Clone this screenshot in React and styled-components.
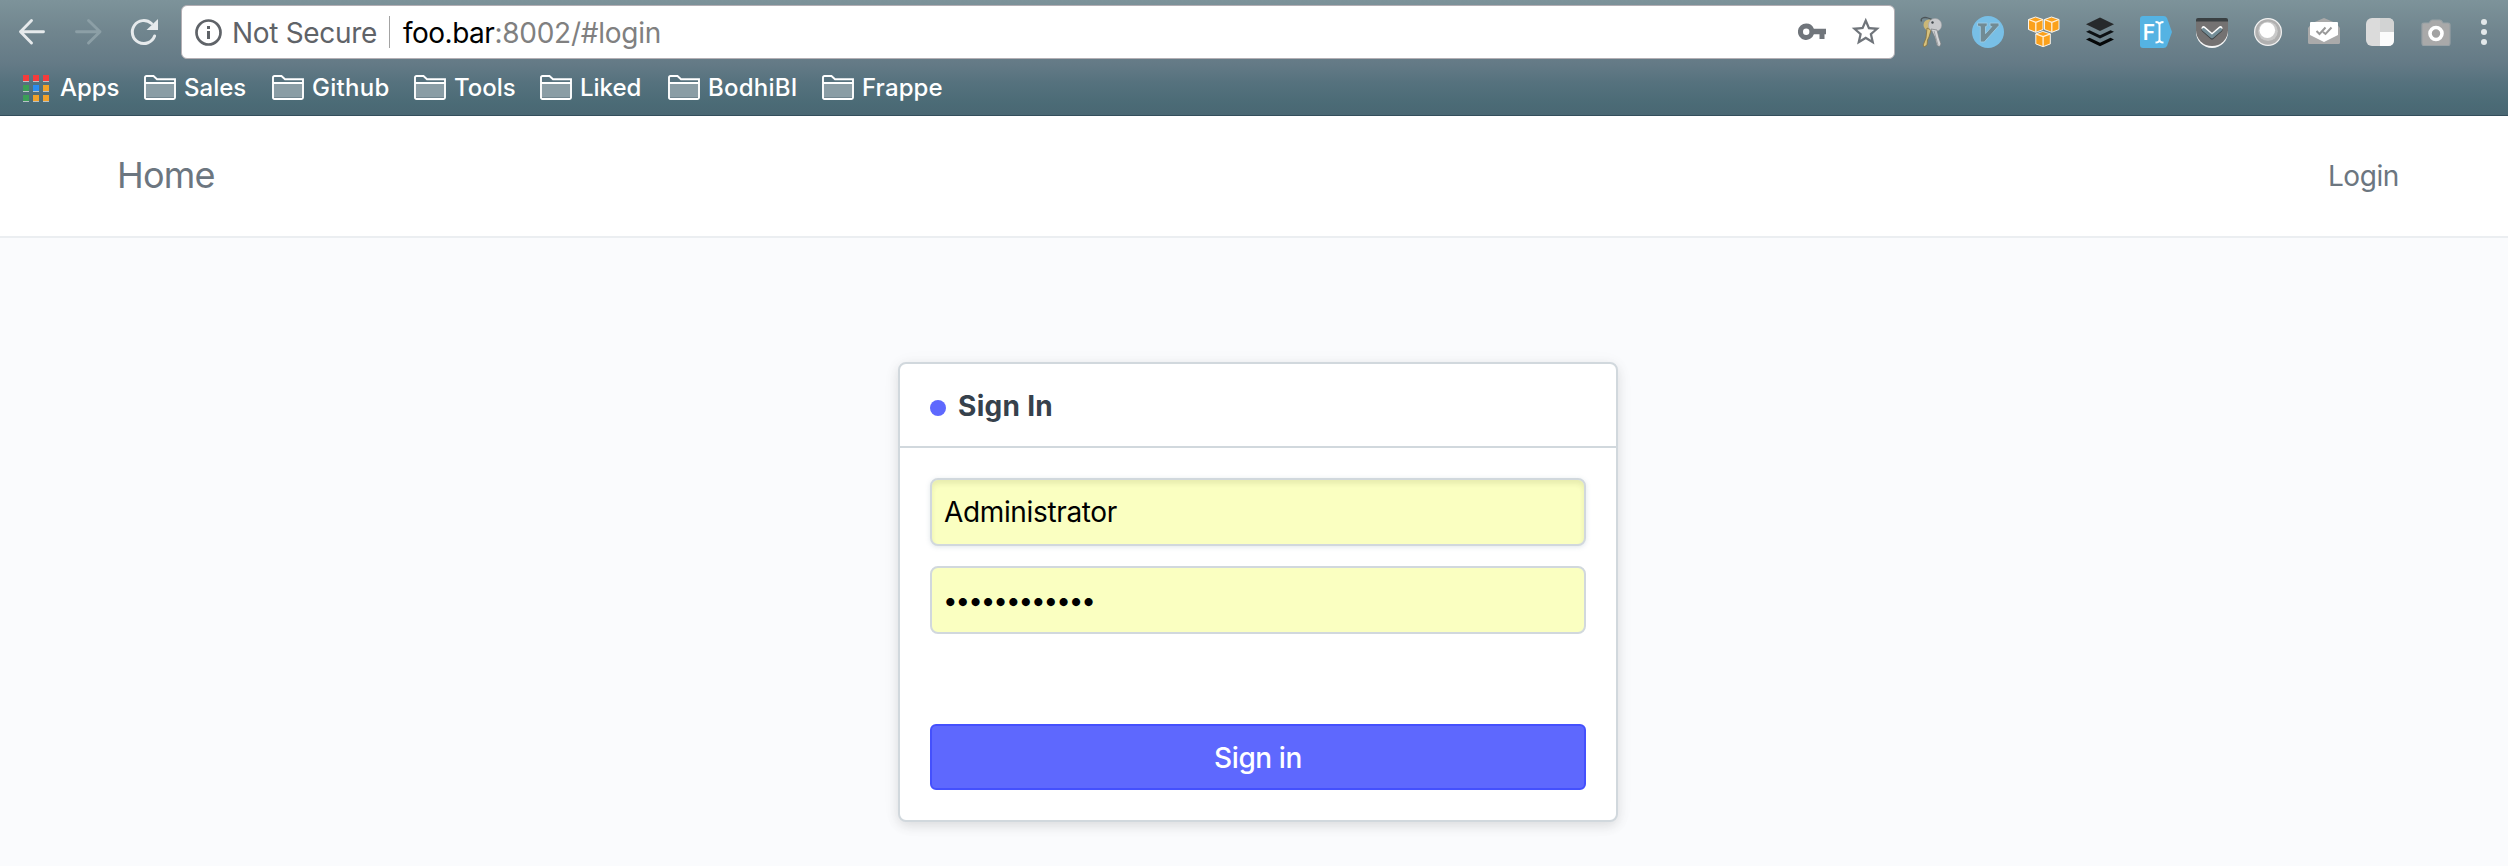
import React from "react";
import styled, { createGlobalStyle } from "styled-components";

const GlobalStyle = createGlobalStyle`
  *, *::before, *::after { box-sizing: border-box; }
  body {
    margin: 0;
    background: #fafbfd;
    font-family: "Inter", "Roboto", sans-serif;
  }
`;

const Page = styled.div`
  display: flex;
  flex-direction: column;
  min-height: 866px;
  overflow: hidden;
`;

/* ---------- Browser chrome ---------- */

const Chrome = styled.header`
  height: 116px;
  flex: none;
  border-bottom: 1px solid #344e5c;
  background: linear-gradient(#7d939a 0, #70858e 32px, #647a86 64px, #56727e 82px, #4b6b76 103px, #4a6773 115px);
`;

const Toolbar = styled.div`
  display: flex;
  align-items: center;
  height: 64px;
  padding: 0 16px;
`;

const NavButtons = styled.div`
  display: flex;
  gap: 24px;
  margin-right: 21px;
`;

const Glyph = styled.svg`
  display: block;
  flex: none;
  width: ${(p) => p.$w || 32}px;
  height: ${(p) => p.$h || 32}px;
`;

const AddressBar = styled.div`
  display: flex;
  align-items: center;
  width: 1714px;
  height: 54px;
  padding: 0 14px 0 12px;
  border: 1px solid #b3afb4;
  border-radius: 6px;
  background: #fff;
  font-size: 28px;
  line-height: 54px;
  white-space: pre;
`;

const Security = styled.span`
  width: 157px;
  margin-left: 8px;
  padding-top: 1px;
  color: #5f6368;
  letter-spacing: -0.31px;
`;

const Separator = styled.span`
  width: 1px;
  height: 32px;
  margin-right: 13px;
  background: #a3a3a3;
`;

const Url = styled.span`
  flex: 1;
  padding-top: 1px;
  color: #808080;
  letter-spacing: -0.25px;
`;

const Host = styled.span`
  color: #000;
  letter-spacing: -0.5px;
`;

const AddressActions = styled.div`
  display: flex;
  align-items: center;
  gap: 25px;
`;

const Extensions = styled.div`
  display: flex;
  gap: 24px;
  margin-left: 21px;
`;

const MenuButton = styled.div`
  display: flex;
  flex-direction: column;
  gap: 4px;
  margin-left: 29px;
`;

const MenuDot = styled.span`
  width: 6px;
  height: 6px;
  border-radius: 50%;
  background: #e3e8ea;
`;

const BookmarksBar = styled.nav`
  display: flex;
  align-items: center;
  height: 48px;
  padding-left: 23px;
`;

const Bookmark = styled.div`
  display: flex;
  align-items: center;
  gap: ${(p) => p.$gap || 8}px;
  width: ${(p) => p.$width}px;
  color: #fff;
  font-size: 24px;
  font-weight: 500;
  line-height: 46px;
  letter-spacing: ${(p) => p.$tracking || 0}px;
`;

const AppsGrid = styled.span`
  display: grid;
  grid-template-columns: repeat(3, 6px);
  grid-auto-rows: 7px;
  gap: 3px 4px;
`;

const AppsCell = styled.span`
  background: ${(p) => p.$color};
  border-bottom: 1px solid #b9c2c6;
`;

/* ---------- Page ---------- */

const Navbar = styled.nav`
  display: flex;
  align-items: center;
  justify-content: space-between;
  flex: none;
  height: 122px;
  padding: 0 109px 0 117px;
  border-bottom: 2px solid #ebeef1;
  background: #fff;
`;

const Brand = styled.a`
  padding-bottom: 2px;
  color: #6c7680;
  font-size: 36px;
  letter-spacing: -0.8px;
`;

const NavLink = styled.a`
  color: #6c7680;
  font-size: 28px;
  letter-spacing: -0.4px;
`;

const Main = styled.main`
  display: flex;
  justify-content: center;
  align-items: flex-start;
  padding: 124px 0 44px 8px;
`;

const Card = styled.section`
  width: 720px;
  height: 460px;
  border: 2px solid #d1d8dd;
  border-radius: 8px;
  background: #fff;
  box-shadow: 0 4px 12px rgba(0, 0, 0, 0.1), 0 2px 20px rgba(0, 0, 0, 0.04);
`;

const CardHeader = styled.h1`
  display: flex;
  align-items: center;
  gap: 12px;
  height: 84px;
  margin: 0;
  padding: 2px 30px 0;
  border-bottom: 2px solid #d1d8dd;
  color: #36414c;
  font-size: 28px;
  font-weight: 700;
  letter-spacing: 0.3px;
`;

const Indicator = styled.span`
  width: 16px;
  height: 16px;
  margin-top: 4px;
  border-radius: 50%;
  background: #5e68fe;
`;

const Form = styled.form`
  display: flex;
  flex-direction: column;
  gap: 20px;
  padding: 30px;
`;

const Field = styled.input`
  width: 100%;
  height: 68px;
  padding: 0 12px;
  border: 2px solid #d1d8dd;
  border-radius: 8px;
  outline: none;
  background: #faffc1;
  color: #000;
  font-family: inherit;
  font-size: 28px;
  letter-spacing: -0.35px;
  box-shadow: ${(p) => (p.$raised ? "inset 0 4px 5px rgba(60, 60, 0, 0.09), 0 1px 5px rgba(100, 130, 150, 0.2)" : "none")};

  &[type="password"] {
    padding-left: 11px;
    font-size: 26px;
    letter-spacing: -2.05px;
  }
`;

const Submit = styled.button`
  height: 66px;
  margin-top: 70px;
  padding: 2px 0 0;
  border: 2px solid #4450fd;
  border-radius: 6px;
  background: #5e68fe;
  color: #fff;
  font-family: inherit;
  font-size: 28px;
  font-weight: 500;
  letter-spacing: -0.4px;
`;

/* ---------- Icons ---------- */

const Arrow = ({ forward }) => (
  <Glyph viewBox="0 0 32 32" fill="none" stroke={forward ? "#8c9fa6" : "#e6eaec"} strokeWidth="2.9" strokeLinecap="round" strokeLinejoin="round">
    <path d={forward ? "M4.5 15.7H28M16.5 4.5 28 15.7 16.5 27" : "M27.5 15.7H4.5M15.5 4.5 4.5 15.7 15.5 27"} />
  </Glyph>
);

const Reload = () => (
  <Glyph viewBox="0 0 32 32">
    <path d="M26.6 20A11.5 11.5 0 1 1 23.5 7.5" fill="none" stroke="#e6eaec" strokeWidth="3" strokeLinecap="round" />
    <path d="M30 3V14H18.5Z" fill="#e6eaec" />
  </Glyph>
);

const Info = () => (
  <Glyph viewBox="0 0 30 30" $w={30} $h={30}>
    <circle cx="14.5" cy="15.5" r="12" fill="none" stroke="#5f6368" strokeWidth="2.7" />
    <path d="M13 9h3v3h-3zM13 14h3v8h-3z" fill="#5f6368" />
  </Glyph>
);

const Key = () => (
  <Glyph viewBox="0 0 28 20" $w={28} $h={20}>
    <path fillRule="evenodd" fill="#70757b" d="M8.2 1.500a8.200 8.200 0 0 1 7.700 5.200H28v5.600h-1.500V17h-5v-4.700h-5.600A8.200 8.200 0 1 1 8.200 1.500ZM8.200 6.500a3.200 3.200 0 1 0 0 6.400 3.200 3.200 0 0 0 0-6.400Z" />
  </Glyph>
);

const Star = () => (
  <Glyph viewBox="1.5 1.5 21 21" $w={29.5} $h={29.5}>
    <path fill="#70757b" d="M22 9.240l-7.190-.620L12 2 9.190 8.630 2 9.240l5.460 4.730L5.820 21 12 17.270 18.180 21l-1.630-7.030L22 9.240zM12 15.400l-3.760 2.270 1-4.280-3.320-2.880 4.380-.380L12 6.100l1.710 4.040 4.380.380-3.320 2.880 1 4.280L12 15.400z" />
  </Glyph>
);

const Folder = () => (
  <Glyph viewBox="0 0 32 26" $h={26}>
    <path d="M2 9h28v15H2z" fill="#8a9da5" />
    <path d="M2 22h28v2H2z" fill="#71858f" />
    <path d="M1 7.800V2.500Q1 1 2.500 1H9.500L13 4.200H31V22.500Q31 24 29.500 24H2.500Q1 24 1 22.500V8H31" fill="none" stroke="#fff" strokeWidth="1.9" />
  </Glyph>
);

const Keys = () => (
  <Glyph viewBox="0 0 32 32">
    <path d="M5.500 5.500C4 2 8 .8 12 2s7.500 3 7 6.500" fill="none" stroke="#4d5558" strokeWidth="1.3" />
    <circle cx="13" cy="9" r="5.5" fill="#cbb777" />
    <path d="M11 12l4 2-2 7-1.500 3-.5 5-3 2-.8-2L10 22z" fill="#d8c27e" stroke="#85713d" strokeWidth=".8" />
    <circle cx="19" cy="9" r="6.6" fill="#c8c9cc" stroke="#a2a5a8" strokeWidth=".6" />
    <circle cx="16.5" cy="6.5" r="1.2" fill="#42494d" />
    <path d="M15 13l6 1 2 8 2 6-1.500 2.500-2.500-1-2-8z" fill="#d4d5d7" stroke="#777b7e" strokeWidth=".7" />
    <path d="M18 15l4 14" stroke="#929598" strokeWidth=".8" />
  </Glyph>
);

const Vimium = () => (
  <Glyph viewBox="0 0 32 32">
    <circle cx="16" cy="16" r="16" fill="#78bfe6" />
    <path d="M5.500 7h9.700v3l-1.700.6v7l6.300-7-1.800-.6V7h9v2.500L12.300 26H8.300V10.500L5.500 10Z" fill="#718b94" stroke="#9ccbe3" strokeWidth=".9" />
  </Glyph>
);

const Cube = ({ x, y }) => (
  <g transform={`translate(${x} ${y})`} stroke="#fff" strokeWidth=".9" strokeLinejoin="round">
    <path d="M0 2.500 7 0 14.500 2.500V12.500L7.300 15.300 0 12.500Z" fill="#fba11c" />
    <path d="M0 2.500 7.300 5.300 14.500 2.500M7.300 5.300V15.300" fill="none" stroke="#fff1da" strokeWidth="1.3" />
  </g>
);

const Cubes = () => (
  <Glyph viewBox="0 0 32 32">
    <Cube x={0.5} y={1} />
    <Cube x={16.5} y={1} />
    <Cube x={7.8} y={15.4} />
  </Glyph>
);

const Layers = () => (
  <Glyph viewBox="0 0 32 32">
    <path d="M16 1.500 30 8.200 16 15 2 8.200Z" fill="#26292b" />
    <path d="M2 15.800 5.500 14.200 16 19.200 26.500 14.200 30 15.800 16 22.600Z" fill="#0d1114" />
    <path d="M2 23.400 5.500 21.800 16 26.800 26.500 21.800 30 23.400 16 30.200Z" fill="#050708" />
  </Glyph>
);

const FieldTag = () => (
  <Glyph viewBox="0 0 32 32">
    <path d="M3 0H23.500Q26 0 27 2L32 16 27 30Q26 32 23.500 32H3Q0 32 0 29V3Q0 0 3 0Z" fill="#55b3e3" />
    <text x="2.7" y="23.6" fill="#fff" fontFamily="Inter, sans-serif" fontSize="21" fontWeight="600">F</text>
    <path d="M15.500 6Q19.500 6 19.500 9Q19.500 6 23.500 6M19.500 8.500V24M15.500 26.500Q19.500 26.500 19.500 23.500Q19.500 26.500 23.500 26.500" fill="none" stroke="#fff" strokeWidth="1.9" />
  </Glyph>
);

const Pocket = () => (
  <Glyph viewBox="0 0 32 32">
    <path d="M0 4H32V16A16 16 0 0 1 0 16Z" fill="#f5f6f6" />
    <path d="M0 3.500H32V14.300A16 15.700 0 0 1 0 14.300Z" fill="#747272" />
    <path d="M0 5.500V4Q0 2 2 2H30Q32 2 32 4V5.500Z" fill="#3a4043" />
    <path d="M7.500 14 16 21.500 24.500 14" fill="none" stroke="#3c4346" strokeWidth="4" strokeLinecap="round" strokeLinejoin="round" />
    <path d="M7.500 12 16 19.500 24.500 12" fill="none" stroke="#fff" strokeWidth="4" strokeLinecap="round" strokeLinejoin="round" />
    <path d="M7.500 13.500 16 20.800 24.500 13.500" fill="none" stroke="#728c96" strokeWidth="3.2" strokeLinecap="round" strokeLinejoin="round" />
  </Glyph>
);

const Lens = () => (
  <Glyph viewBox="0 0 32 32">
    <circle cx="16" cy="16" r="13.4" fill="#b0b0b0" stroke="#f1f1f1" strokeWidth="1.2" />
    <circle cx="16" cy="15.2" r="9.8" fill="#c9c9c9" />
    <circle cx="15.3" cy="14.3" r="7.8" fill="#fff" />
  </Glyph>
);

const MailCheck = () => (
  <Glyph viewBox="0 0 32 32">
    <path d="M0 12 2 9.500V8L16 2 30 8V9.500L32 12V26.500Q32 28 30.500 28H1.500Q0 28 0 26.500Z" fill="#aaa" />
    <path d="M2 7Q2 6 3 6H29Q30 6 30 7V19L16 26 2 19Z" fill="#fff" />
    <path d="M8.500 15 11.500 18 17.500 11.500M15 16 17.500 18 23.500 11.500" fill="none" stroke="#999" strokeWidth="2" />
  </Glyph>
);

const Tiles = () => (
  <Glyph viewBox="0 0 32 32">
    <rect x="2" y="2" width="28" height="28" rx="6" fill="#dbdbdb" />
    <path d="M16 2H24Q30 2 30 8V16H16Z" fill="#d2d3d3" />
    <path d="M16 16H30V24Q30 30 24 30H16Z" fill="#fbfbfb" />
  </Glyph>
);

const Camera = () => (
  <Glyph viewBox="0 0 32 32">
    <path d="M4 7H9Q11 4 12 4H20Q21.500 4 23 7H28Q30 7 30 9V27Q30 29.500 28 29.500H4Q2 29.500 2 27V9Q2 7 4 7Z" fill="#a9a9a9" stroke="#98a1a5" strokeWidth="1.2" />
    <circle cx="16" cy="17.5" r="6" fill="#a2a2a2" stroke="#fff" strokeWidth="3.6" />
  </Glyph>
);

const appColors = ["#f43b3b", "#f43b3b", "#f43b3b", "#3b9e57", "#2a8df2", "#f2a129", "#3b9e57", "#f2a129", "#f2a129"];

const folders = [
  { name: "Sales", width: 128, tracking: 0 },
  { name: "Github", width: 142, tracking: 0.3 },
  { name: "Tools", width: 126, tracking: 0 },
  { name: "Liked", width: 128, tracking: 0 },
  { name: "BodhiBI", width: 154, tracking: 0.25 },
  { name: "Frappe", width: 130, tracking: 0.1 },
];

export default function App() {
  return (
    <Page>
      <GlobalStyle />
      <Chrome>
        <Toolbar>
          <NavButtons>
            <Arrow />
            <Arrow forward />
            <Reload />
          </NavButtons>
          <AddressBar>
            <Info />
            <Security>Not Secure</Security>
            <Separator />
            <Url><Host>foo.bar</Host>:8002/#login</Url>
            <AddressActions>
              <Key />
              <Star />
            </AddressActions>
          </AddressBar>
          <Extensions>
            <Keys />
            <Vimium />
            <Cubes />
            <Layers />
            <FieldTag />
            <Pocket />
            <Lens />
            <MailCheck />
            <Tiles />
            <Camera />
          </Extensions>
          <MenuButton>
            <MenuDot />
            <MenuDot />
            <MenuDot />
          </MenuButton>
        </Toolbar>
        <BookmarksBar>
          <Bookmark $width={121} $gap={11} $tracking={-0.1}>
            <AppsGrid>
              {appColors.map((color, i) => <AppsCell key={i} $color={color} />)}
            </AppsGrid>
            Apps
          </Bookmark>
          {folders.map((f) => (
            <Bookmark key={f.name} $width={f.width} $tracking={f.tracking}>
              <Folder />
              {f.name}
            </Bookmark>
          ))}
        </BookmarksBar>
      </Chrome>
      <Navbar>
        <Brand>Home</Brand>
        <NavLink>Login</NavLink>
      </Navbar>
      <Main>
        <Card>
          <CardHeader>
            <Indicator />
            Sign In
          </CardHeader>
          <Form onSubmit={(e) => e.preventDefault()}>
            <Field type="text" defaultValue="Administrator" $raised />
            <Field type="password" defaultValue="administrato" />
            <Submit type="submit">Sign in</Submit>
          </Form>
        </Card>
      </Main>
    </Page>
  );
}
